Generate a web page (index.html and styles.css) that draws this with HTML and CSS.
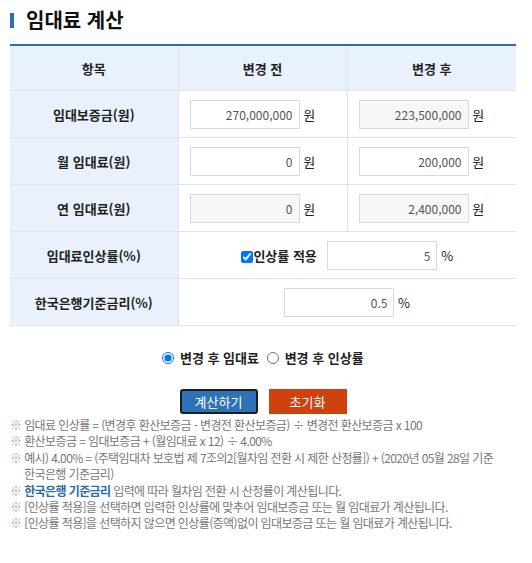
FILE: index.html
```html
<!DOCTYPE html>
<html lang="ko">
<head>
  <meta charset="UTF-8">
  <meta name="viewport" content="width=device-width, initial-scale=1.0">
  <title>임대료 계산</title>
  <link rel="stylesheet" href="styles.css">
</head>
<body>
  <div class="calc-wrap">
    <h2 class="calc-title">임대료 계산</h2>

    <table class="calc-table">
      <colgroup>
        <col class="col-label">
        <col class="col-value">
        <col class="col-value">
      </colgroup>
      <thead>
        <tr>
          <th>항목</th>
          <th>변경 전</th>
          <th>변경 후</th>
        </tr>
      </thead>
      <tbody>
        <tr>
          <th>임대보증금(원)</th>
          <td><input type="text" class="num-input" value="270,000,000"> <span class="unit">원</span></td>
          <td><input type="text" class="num-input readonly" value="223,500,000" readonly> <span class="unit">원</span></td>
        </tr>
        <tr>
          <th>월 임대료(원)</th>
          <td><input type="text" class="num-input" value="0"> <span class="unit">원</span></td>
          <td><input type="text" class="num-input" value="200,000"> <span class="unit">원</span></td>
        </tr>
        <tr>
          <th>연 임대료(원)</th>
          <td><input type="text" class="num-input readonly" value="0" readonly> <span class="unit">원</span></td>
          <td><input type="text" class="num-input readonly" value="2,400,000" readonly> <span class="unit">원</span></td>
        </tr>
        <tr>
          <th>임대료인상률(%)</th>
          <td colspan="2" class="center-cell">
            <label class="check-label"><input type="checkbox" checked>인상률 적용</label>
            <input type="text" class="num-input" value="5"> <span class="unit">%</span>
          </td>
        </tr>
        <tr>
          <th>한국은행기준금리(%)</th>
          <td colspan="2" class="center-cell">
            <input type="text" class="num-input" value="0.5"> <span class="unit">%</span>
          </td>
        </tr>
      </tbody>
    </table>

    <div class="radio-row">
      <label><input type="radio" name="mode" checked> 변경 후 임대료</label>
      <label><input type="radio" name="mode"> 변경 후 인상률</label>
    </div>

    <div class="btn-row">
      <button type="button" class="btn btn-calc">계산하기</button>
      <button type="button" class="btn btn-reset">초기화</button>
    </div>

    <ul class="notes">
      <li>임대료 인상률 = (변경후 환산보증금 - 변경전 환산보증금) ÷ 변경전 환산보증금 x 100</li>
      <li>환산보증금 = 임대보증금 + (월임대료 x 12) ÷ 4.00%</li>
      <li>예시) 4.00% = (주택임대차 보호법 제 7조의2[월차임 전환 시 제한 산정률]) + (2020년 05월 28일 기준 한국은행 기준금리)</li>
      <li><strong>한국은행 기준금리</strong> 입력에 따라 월차임 전환 시 산정률이 계산됩니다.</li>
      <li>[인상률 적용]을 선택하면 입력한 인상률에 맞추어 임대보증금 또는 월 임대료가 계산됩니다.</li>
      <li>[인상률 적용]을 선택하지 않으면 인상률(증액)없이 임대보증금 또는 월 임대료가 계산됩니다.</li>
    </ul>
  </div>
</body>
</html>
```

FILE: styles.css
```css
/* 임대료 계산기 */
body {
  margin: 0;
  padding: 0;
  background-color: #fff;
  font-family: 'Noto Sans CJK KR', 'Noto Sans', sans-serif;
  color: #222;
}

.calc-wrap {
  width: 506px;
  padding: 10px 10px 0;
}

.calc-title {
  display: flex;
  align-items: center;
  height: 20px;
  margin: 0 0 14px;
  padding-left: 12px;
  font-size: 20px;
  line-height: 20px;
  font-weight: bold;
  color: #111;
}

.calc-title::before {
  content: "";
  width: 4px;
  height: 15px;
  margin-right: 12px;
  margin-left: -12px;
  background-color: #2a70b8;
}

.calc-table {
  width: 100%;
  border-collapse: collapse;
  table-layout: fixed;
  border-top: 2px solid #2a70b8;
  font-size: 13px;
}

.col-label {
  width: 168px;
}

.calc-table th,
.calc-table td {
  border-bottom: 1px solid #e3e3e3;
  border-right: 1px solid #e3e3e3;
  text-align: center;
  padding: 0;
  height: 46px;
}

.calc-table td {
  text-align: left;
  padding-left: 11px;
}

.calc-table td.center-cell {
  text-align: center;
  padding-left: 0;
}

.calc-table th:last-child,
.calc-table td:last-child {
  border-right: 0;
}

.calc-table thead th {
  height: 44px;
}

.calc-table th {
  background-color: #e9f1fc;
  font-weight: bold;
  color: #222;
}

.num-input {
  width: 110px;
  height: 29px;
  box-sizing: border-box;
  border: 1px solid #d9d9d9;
  padding: 0 6px;
  text-align: right;
  font-family: 'Noto Sans CJK KR', 'Noto Sans', sans-serif;
  font-size: 12px;
  color: #555;
  vertical-align: middle;
}

.num-input.readonly {
  background-color: #f7f7f7;
}

.unit {
  font-size: 13px;
  vertical-align: middle;
}

.check-label {
  font-weight: bold;
  vertical-align: middle;
  margin-right: 7px;
}

.check-label input {
  width: 12px;
  height: 12px;
  margin: 0;
  vertical-align: -2px;
}

.radio-row {
  display: flex;
  justify-content: center;
  gap: 8px;
  margin-top: 22px;
  font-size: 13px;
  font-weight: bold;
}

.radio-row input {
  width: 12px;
  height: 12px;
  margin: 0 2px 0 0;
  vertical-align: -1px;
}

.btn-row {
  display: flex;
  justify-content: center;
  gap: 11px;
  margin-top: 22px;
}

.btn {
  width: 78px;
  height: 25px;
  border: 0;
  padding: 0;
  color: #fff;
  font-family: 'Noto Sans CJK KR', 'Noto Sans', sans-serif;
  font-size: 13px;
}

.btn-calc {
  background-color: #2b72b9;
  border: 2px solid #1c1c1c;
  border-radius: 3px;
}

.btn-reset {
  background-color: #cf420d;
}

.notes {
  list-style: none;
  margin: 3px 0 0;
  padding: 0;
  font-size: 12px;
  line-height: 16.4px;
  letter-spacing: -0.6px;
  word-break: keep-all;
  color: #777;
}

.notes li {
  padding-left: 14px;
  text-indent: -14px;
}

.notes li::before {
  content: "※ ";
  color: #aaa;
}

.notes strong {
  color: #2a6bb0;
}
```
